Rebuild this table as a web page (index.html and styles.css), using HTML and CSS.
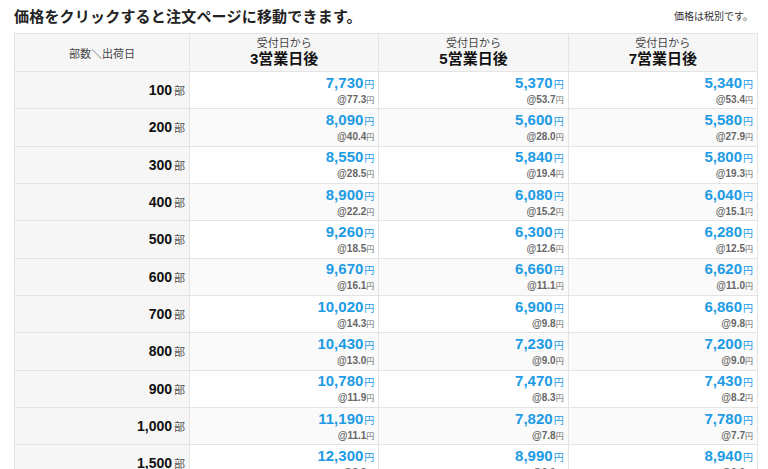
FILE: index.html
```html
<!DOCTYPE html>
<html lang="ja">
<head>
<meta charset="utf-8">
<link rel="stylesheet" href="styles.css">
</head>
<body>
<div class="page">
  <div class="top">
    <h1 class="title">価格をクリックすると注文ページに移動できます。</h1>
    <p class="note">価格は税別です。</p>
  </div>
  <table class="prices">
    <colgroup><col class="c0"><col class="c1"><col class="c1"><col class="c1"></colgroup>
    <thead>
      <tr>
        <th class="corner">部数＼出荷日</th>
        <th><span class="from">受付日から</span><span class="days">3営業日後</span></th>
        <th><span class="from">受付日から</span><span class="days">5営業日後</span></th>
        <th><span class="from">受付日から</span><span class="days">7営業日後</span></th>
      </tr>
    </thead>
    <tbody>
      <tr><th><b>100</b><small>部</small></th>
        <td><a class="p">7,730<small>円</small></a><span class="u">@77.3<small>円</small></span></td>
        <td><a class="p">5,370<small>円</small></a><span class="u">@53.7<small>円</small></span></td>
        <td><a class="p">5,340<small>円</small></a><span class="u">@53.4<small>円</small></span></td></tr>
      <tr class="alt"><th><b>200</b><small>部</small></th>
        <td><a class="p">8,090<small>円</small></a><span class="u">@40.4<small>円</small></span></td>
        <td><a class="p">5,600<small>円</small></a><span class="u">@28.0<small>円</small></span></td>
        <td><a class="p">5,580<small>円</small></a><span class="u">@27.9<small>円</small></span></td></tr>
      <tr><th><b>300</b><small>部</small></th>
        <td><a class="p">8,550<small>円</small></a><span class="u">@28.5<small>円</small></span></td>
        <td><a class="p">5,840<small>円</small></a><span class="u">@19.4<small>円</small></span></td>
        <td><a class="p">5,800<small>円</small></a><span class="u">@19.3<small>円</small></span></td></tr>
      <tr class="alt"><th><b>400</b><small>部</small></th>
        <td><a class="p">8,900<small>円</small></a><span class="u">@22.2<small>円</small></span></td>
        <td><a class="p">6,080<small>円</small></a><span class="u">@15.2<small>円</small></span></td>
        <td><a class="p">6,040<small>円</small></a><span class="u">@15.1<small>円</small></span></td></tr>
      <tr><th><b>500</b><small>部</small></th>
        <td><a class="p">9,260<small>円</small></a><span class="u">@18.5<small>円</small></span></td>
        <td><a class="p">6,300<small>円</small></a><span class="u">@12.6<small>円</small></span></td>
        <td><a class="p">6,280<small>円</small></a><span class="u">@12.5<small>円</small></span></td></tr>
      <tr class="alt"><th><b>600</b><small>部</small></th>
        <td><a class="p">9,670<small>円</small></a><span class="u">@16.1<small>円</small></span></td>
        <td><a class="p">6,660<small>円</small></a><span class="u">@11.1<small>円</small></span></td>
        <td><a class="p">6,620<small>円</small></a><span class="u">@11.0<small>円</small></span></td></tr>
      <tr><th><b>700</b><small>部</small></th>
        <td><a class="p">10,020<small>円</small></a><span class="u">@14.3<small>円</small></span></td>
        <td><a class="p">6,900<small>円</small></a><span class="u">@9.8<small>円</small></span></td>
        <td><a class="p">6,860<small>円</small></a><span class="u">@9.8<small>円</small></span></td></tr>
      <tr class="alt"><th><b>800</b><small>部</small></th>
        <td><a class="p">10,430<small>円</small></a><span class="u">@13.0<small>円</small></span></td>
        <td><a class="p">7,230<small>円</small></a><span class="u">@9.0<small>円</small></span></td>
        <td><a class="p">7,200<small>円</small></a><span class="u">@9.0<small>円</small></span></td></tr>
      <tr><th><b>900</b><small>部</small></th>
        <td><a class="p">10,780<small>円</small></a><span class="u">@11.9<small>円</small></span></td>
        <td><a class="p">7,470<small>円</small></a><span class="u">@8.3<small>円</small></span></td>
        <td><a class="p">7,430<small>円</small></a><span class="u">@8.2<small>円</small></span></td></tr>
      <tr class="alt"><th><b>1,000</b><small>部</small></th>
        <td><a class="p">11,190<small>円</small></a><span class="u">@11.1<small>円</small></span></td>
        <td><a class="p">7,820<small>円</small></a><span class="u">@7.8<small>円</small></span></td>
        <td><a class="p">7,780<small>円</small></a><span class="u">@7.7<small>円</small></span></td></tr>
      <tr><th><b>1,500</b><small>部</small></th>
        <td><a class="p">12,300<small>円</small></a><span class="u">@8.2<small>円</small></span></td>
        <td><a class="p">8,990<small>円</small></a><span class="u">@6.0<small>円</small></span></td>
        <td><a class="p">8,940<small>円</small></a><span class="u">@6.0<small>円</small></span></td></tr>
    </tbody>
  </table>
</div>
</body>
</html>
```
FILE: styles.css
```css
html, body {
  margin: 0;
  padding: 0;
  background: #fff;
}
body {
  font-family: "Liberation Sans", "Noto Sans CJK JP", sans-serif;
  color: #222;
}
.page {
  padding: 0 10px 0 14px;
}
.top {
  display: flex;
  justify-content: space-between;
  align-items: flex-end;
  height: 33px;
}
.title {
  margin: 0 0 7px 0;
  font-size: 15px;
  line-height: 18px;
  font-weight: bold;
  color: #222;
  letter-spacing: 0.2px;
}
.note {
  margin: 0 5px 9px 0;
  font-size: 10px;
  line-height: 14px;
  color: #333;
}
.prices {
  width: 744px;
  border-collapse: collapse;
  table-layout: fixed;
}
.c0 { width: 175px; }
.prices th, .prices td {
  border: 1px solid #e4e4e4;
  padding: 0 4px;
}
.prices thead th {
  height: 37px;
  background: #f6f6f6;
  text-align: center;
  font-weight: normal;
  vertical-align: middle;
}
.corner {
  font-size: 11px;
  color: #444;
}
.from {
  display: block;
  font-size: 11px;
  line-height: 13px;
  color: #444;
  margin-top: 1px;
}
.days {
  display: block;
  font-size: 15px;
  line-height: 18px;
  font-weight: bold;
  color: #111;
  margin-bottom: 2px;
}
.prices tbody tr {
  height: 37.33px;
}
.prices tbody th {
  background: #f6f6f6;
  text-align: right;
  font-weight: normal;
  padding-right: 4px;
}
.prices tbody th b {
  font-size: 14px;
  color: #111;
}
.prices tbody th small {
  font-size: 11px;
  color: #555;
  margin-left: 2px;
}
.prices td {
  text-align: right;
  vertical-align: middle;
  background: #fff;
}
.prices tr.alt td {
  background: #fafafa;
}
.p {
  display: block;
  font-size: 15px;
  line-height: 17px;
  font-weight: bold;
  color: #1d9be4;
  text-decoration: none;
}
.p small {
  font-size: 10px;
  font-weight: normal;
  margin-left: 1px;
}
.u {
  display: block;
  font-size: 10px;
  line-height: 13px;
  font-weight: bold;
  color: #666;
}
.u small {
  font-size: 8px;
  font-weight: normal;
}
```
